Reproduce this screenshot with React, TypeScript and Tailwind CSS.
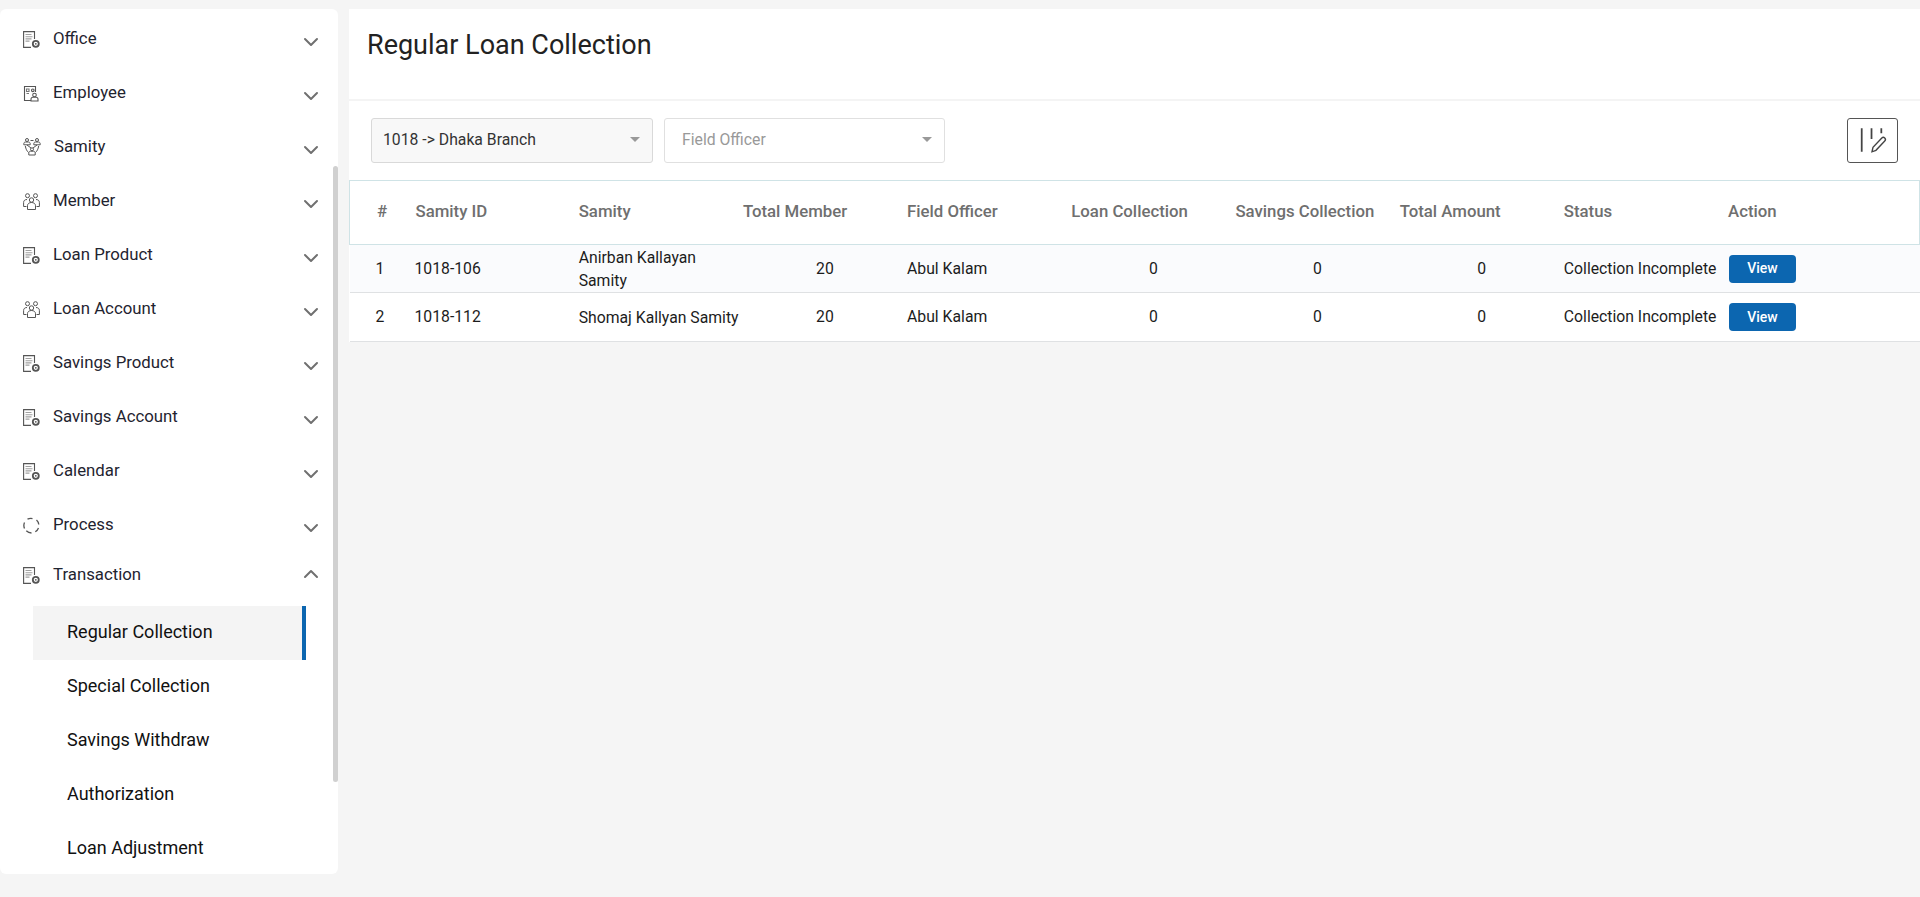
import { ChevronDown, ChevronUp } from "lucide-react";

const DocIcon = () => (
  <svg width="17" height="17" viewBox="0 0 17 17" fill="none" stroke="#555" strokeWidth="1.100">
    <path d="M11.500 8V.6H.6v15.800h7.400" />
    <path d="M2.500 3.500h6M2.500 5.700h7M2.500 7.900h6M2.500 10.100h4" stroke="#a0a0a0" />
    <circle cx="12.800" cy="12.800" r="3" strokeWidth="1.800" />
    <circle cx="12.800" cy="12.800" r=".9" fill="#555" stroke="none" />
  </svg>
);

const EmployeeIcon = () => (
  <svg width="17" height="17" viewBox="0 0 17 17" fill="none" stroke="#555" strokeWidth="1.100">
    <path d="M8 15.500H1.500V1.500h11v5.500" />
    <path d="M3.500 4h2.500v2.500H3.500zM3.500 8.500h2.500" stroke="#777" />
    <circle cx="9.800" cy="5.300" r="1.300" />
    <circle cx="11.500" cy="10" r="1.800" />
    <path d="M8 16v-1.700c0-1 1-2 2-2h3c1 0 2 1 2 2v1.700z" />
  </svg>
);

const SamityIcon = () => (
  <svg width="18" height="18" viewBox="0 0 18 18" fill="none" stroke="#555" strokeWidth="1">
    <circle cx="4" cy="2" r="1.500" />
    <path d="M.8 6.800V5.800c0-1 .7-1.800 1.700-1.800h3c1 0 1.700.8 1.700 1.800v1z" />
    <circle cx="14" cy="2" r="1.500" />
    <path d="M10.800 6.800V5.800c0-1 .7-1.800 1.700-1.800h3c1 0 1.700.8 1.700 1.800v1z" />
    <circle cx="9" cy="11.300" r="1.500" />
    <path d="M5.800 17v-2c0-1 .7-1.800 1.700-1.800h3c1 0 1.700.8 1.700 1.800v2z" />
    <path d="M7.500 2.500h3M2.300 8c.5 3 1.600 5 3.200 6.500M15.700 8c-.5 3-1.600 5-3.200 6.500M4 7l4 3M14 7l-4 3" />
  </svg>
);

const MemberIcon = () => (
  <svg width="17" height="17" viewBox="0 0 17 17" fill="none" stroke="#555" strokeWidth="1">
    <circle cx="4.500" cy="2.700" r="2" />
    <circle cx="12.500" cy="2.700" r="2" />
    <circle cx="8.500" cy="7" r="2.200" />
    <path d="M3.500 13.500H.6V9.500c0-2 1.400-3 3.400-3M13.500 13.500h2.900V9.500c0-2-1.400-3-3.400-3" />
    <path d="M4.500 16.500v-3.800c0-2 1.700-3.200 4-3.200s4 1.200 4 3.200v3.800z" />
  </svg>
);

const ProcessIcon = () => (
  <svg width="17" height="17" viewBox="0 0 17 17" fill="none" stroke="#555" strokeWidth="1.300">
    <path d="M4.500 2.200a7.500 7.500 0 0 1 5-.6M13.500 3a7.500 7.500 0 0 1 2.300 4.500M15.500 11a7.500 7.500 0 0 1-3.200 3.800M8.500 16a7.500 7.500 0 0 1-5.200-2.200M1.500 11.500a7.500 7.500 0 0 1 0-6" />
  </svg>
);

const menu = [
  { label: "Office", icon: <DocIcon /> },
  { label: "Employee", icon: <EmployeeIcon /> },
  { label: "Samity", icon: <SamityIcon /> },
  { label: "Member", icon: <MemberIcon /> },
  { label: "Loan Product", icon: <DocIcon /> },
  { label: "Loan Account", icon: <MemberIcon /> },
  { label: "Savings Product", icon: <DocIcon /> },
  { label: "Savings Account", icon: <DocIcon /> },
  { label: "Calendar", icon: <DocIcon /> },
  { label: "Process", icon: <ProcessIcon /> },
];

const subMenu = ["Regular Collection", "Special Collection", "Savings Withdraw", "Authorization", "Loan Adjustment"];

const columns = ["#", "Samity ID", "Samity", "Total Member", "Field Officer", "Loan Collection", "Savings Collection", "Total Amount", "Status", "Action"];

const rows = [
  { no: 1, id: "1018-106", samity: "Anirban Kallayan Samity" },
  { no: 2, id: "1018-112", samity: "Shomaj Kallyan Samity" },
];

const Caret = () => <span className="w-0 h-0 border-x-[5px] border-x-transparent border-t-[5px] border-t-[#999]" />;

export default function App() {
  return (
    <div className="flex h-[897px] overflow-hidden bg-[#f5f5f5] pt-[9px] font-['Roboto',sans-serif]">
      <aside className="relative w-[338px] h-[865px] shrink-0 rounded-[6px] bg-white overflow-hidden">
        {menu.map((item) => (
          <div key={item.label} className="flex h-[54px] items-center pl-[23px] pr-[15px]">
            <span className="flex w-[30px] mt-[6px]">{item.icon}</span>
            <span className={item.label === "Samity" ? "flex-1 mt-[5px] pl-px text-[16.800px] text-[#1f2430]" : "flex-1 mt-[5px] text-[16.800px] text-[#1f2430]"}>{item.label}</span>
            <ChevronDown size={24} strokeWidth={2} className="mt-[12px] text-[#707070]" />
          </div>
        ))}
        <div className="flex h-[50px] items-center pl-[23px] pr-[15px] mb-[7px]">
          <span className="flex w-[30px] mt-[2px]"><DocIcon /></span>
          <span className="flex-1 mt-px text-[16.800px] text-[#1f2430]">Transaction</span>
          <ChevronUp size={24} strokeWidth={2} className="text-[#707070]" />
        </div>
        <ul className="ml-[33px] w-[273px]">
          {subMenu.map((label, i) => (
            <li
              key={label}
              className={i === 0
                ? "flex h-[54px] items-center pl-[34px] pb-[3px] text-[18px] text-[#111] bg-[#f4f4f4] border-r-4 border-[#0c66b0]"
                : "flex h-[54px] items-center pl-[34px] pb-[3px] text-[18px] text-[#111]"}
            >
              {label}
            </li>
          ))}
        </ul>
        {/* scrollbar thumb */}
        <div className="absolute right-0 top-[157px] w-[5px] h-[616px] rounded-[3px] bg-[#d0d0d0]" />
      </aside>

      <main className="ml-[11px] flex-1 self-start bg-white">
        <div className="h-[92px] pl-[18px] pt-[18px] border-b-2 border-[#f4f4f4]">
          <h1 className="text-[27px] leading-[36px] text-[#222]">Regular Loan Collection</h1>
        </div>
        <div className="flex h-[79px] pl-[22px] pr-[22px] pt-[17px] gap-[11px]">
          <div className="flex h-[45px] w-[282px] items-center justify-between rounded-[3px] border border-[#d9d9d9] bg-[#f8f8f8] pl-[11px] pr-[12px] pb-[2px] text-[15.750px] text-[#333]">
            1018 -&gt; Dhaka Branch
            <Caret />
          </div>
          <div className="flex h-[45px] w-[281px] items-center justify-between rounded-[3px] border border-[#e0e0e0] pl-[17px] pr-[12px] pb-[2px] text-[15.750px] text-[#999]">
            Field Officer
            <Caret />
          </div>
          <button className="ml-auto flex h-[45px] w-[51px] items-center justify-center rounded-[3px] border-[1.5px] border-[#555]">
            <svg width="50" height="45" viewBox="0 0 50 45" fill="none" stroke="#444" strokeWidth="1.800">
              <path d="M14 10v24M24 10v11M34 10v5" />
              <path d="M24.500 34l1-4.500 9-9.500a1.700 1.700 0 0 1 3 3l-9 9.500z" strokeWidth="1.400" />
            </svg>
          </button>
        </div>
        <table className="w-full table-fixed border-collapse text-[15.750px]">
          <thead>
            <tr className="h-[64px] border border-[#cfe3e6] text-[16.800px]">
              {columns.map((col, i) => (
                <th
                  key={col}
                  className={i === 0
                    ? "w-[65px] pl-[27px] pb-[2px] text-left font-medium text-[#6f6f6f]"
                    : i === 1
                      ? "w-[164.200px] pl-px text-left font-medium text-[#6f6f6f] pb-[2px] whitespace-nowrap"
                      : "w-[164.200px] last:w-auto text-left font-medium text-[#6f6f6f] pb-[2px] whitespace-nowrap"}
                >
                  {col}
                </th>
              ))}
            </tr>
          </thead>
          <tbody className="text-[#1c1c1c]">
            {rows.map((row) => (
              <tr key={row.no} className={row.no === 1 ? "h-[48px] border-b border-[#dfe1e3] bg-[#fafbfd]" : "h-[49px] border-b border-[#dfe1e3]"}>
                <td className="pl-[26px]">{row.no}</td>
                <td>{row.id}</td>
                <td className="leading-[23px]">{row.samity}</td>
                <td className="text-center">20</td>
                <td>Abul Kalam</td>
                <td className="text-center">0</td>
                <td className="text-center">0</td>
                <td className="text-center">0</td>
                <td className="whitespace-nowrap">Collection Incomplete</td>
                <td className="pl-px">
                  <button className="flex h-[28px] w-[67px] items-center justify-center rounded-[4px] bg-[#0c66b0] text-[14px] font-medium text-white">View</button>
                </td>
              </tr>
            ))}
          </tbody>
        </table>
      </main>
    </div>
  );
}
